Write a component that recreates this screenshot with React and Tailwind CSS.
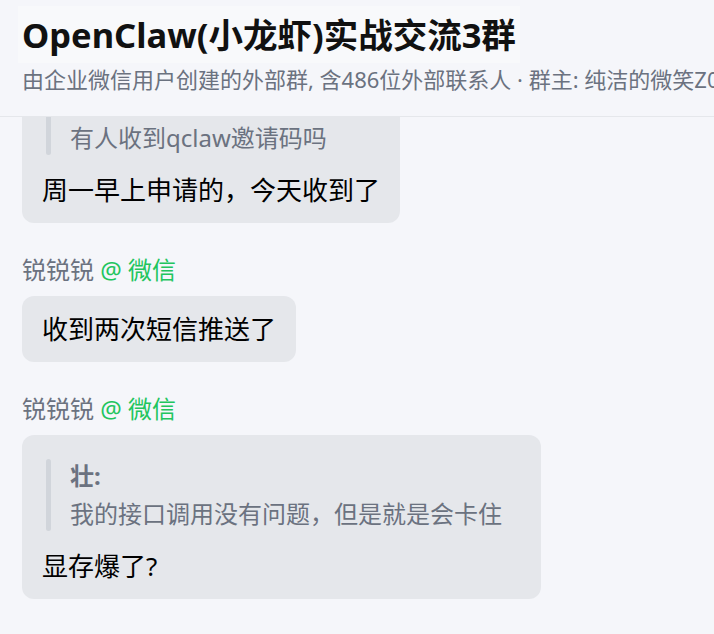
import React from "react";

const FONT = "font-['Noto_Sans','Noto_Sans_CJK_SC',sans-serif]";

function Quote({ name, text, clipped }) {
  return (
    <div className="ml-[4px] flex">
      <div className={`w-[5px] shrink-0 bg-[#d1d5db] ${clipped ? "rounded-b-full" : "rounded-full"}`} />
      <div className={`pl-[19px] pr-[19px] text-[24px] leading-[34px] text-[#6b7280] ${clipped ? "pt-[4px]" : ""}`}>
        {name && <div className="font-bold">{name}</div>}
        <div className={name ? "mt-[4px]" : ""}>{text}</div>
      </div>
    </div>
  );
}

function Sender() {
  return (
    <div className="mt-[30px] mb-[9px] text-[24px] leading-[34px] text-[#6b7280]">
      锐锐锐 <span className="text-[#22c55e]">@ 微信</span>
    </div>
  );
}

export default function App() {
  return (
    <div className={`h-[634px] w-[714px] overflow-hidden bg-[#f5f6fa] ${FONT}`}>
      <header className="border-b border-[#e5e7eb] pl-[22px] pt-[11px] pb-[22px]">
        <h1 className="text-[34.5px] font-bold leading-[48px] text-[#111111]">
          <span className="-ml-[4px] bg-[#f8f9fb] px-[4px] py-[5px]">OpenClaw(小龙虾)实战交流3群</span>
        </h1>
        <p className="mt-[5px] overflow-hidden whitespace-nowrap text-[22px] leading-[30px] text-[#6b7280]">
          由企业微信用户创建的外部群, 含486位外部联系人 · 群主: 纯洁的微笑Z0
        </p>
      </header>
      <main className="px-[22px]">
        <div className="inline-block rounded-b-[12px] bg-[#e5e7eb] px-[20px] pb-[13px]">
          <Quote text="有人收到qclaw邀请码吗" clipped />
          <div className="mt-[15px] text-[26px] leading-[40px] text-black">周一早上申请的，今天收到了</div>
        </div>

        <Sender />
        <div className="inline-block rounded-[12px] bg-[#e5e7eb] px-[20px] py-[13px]">
          <div className="text-[26px] leading-[40px] text-black">收到两次短信推送了</div>
        </div>

        <Sender />
        <div className="inline-block rounded-[12px] bg-[#e5e7eb] px-[20px] py-[13px]">
          <div className="mt-[11px]">
            <Quote name="壮:" text="我的接口调用没有问题，但是就是会卡住" />
          </div>
          <div className="mt-[15px] text-[26px] leading-[40px] text-black">显存爆了?</div>
        </div>
      </main>
    </div>
  );
}
